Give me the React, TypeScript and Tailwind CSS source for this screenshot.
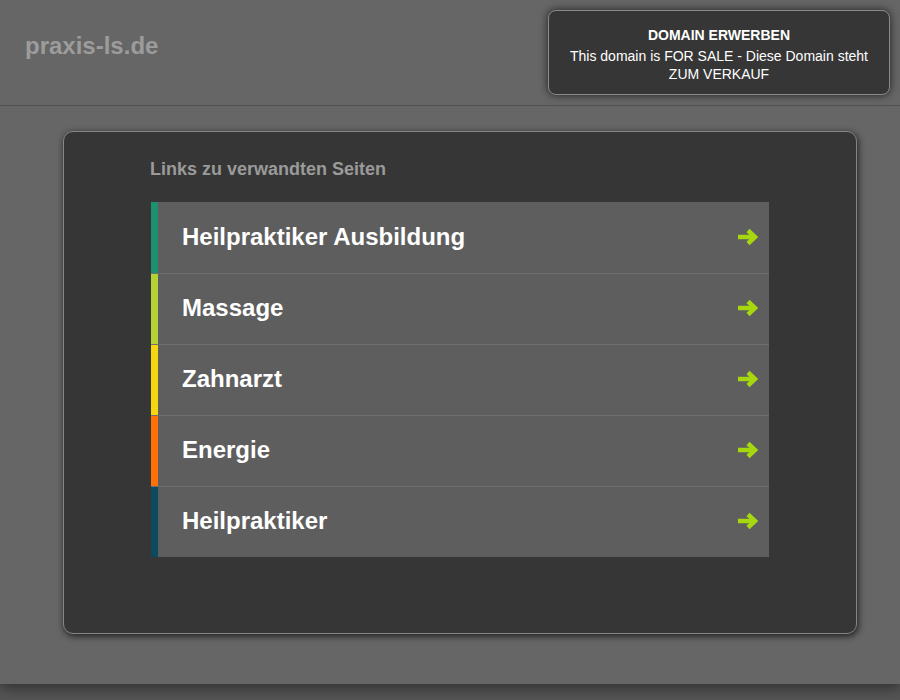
import React from 'react'

type LinkItem = {
  label: string
  bar: string
}

const links: LinkItem[] = [
  { label: 'Heilpraktiker Ausbildung', bar: 'bg-[#1e8f6f]' },
  { label: 'Massage', bar: 'bg-[#b4d236]' },
  { label: 'Zahnarzt', bar: 'bg-[#f6d60f]' },
  { label: 'Energie', bar: 'bg-[#ff7005]' },
  { label: 'Heilpraktiker', bar: 'bg-[#0c4a5f]' },
]

function Arrow() {
  return (
    <svg width="21" height="18" viewBox="0 0 21 18" className="shrink-0">
      <path d="M1 9 H15" stroke="#a6d70f" strokeWidth="4.5" fill="none" />
      <path d="M11 2.5 L18 9 L11 15.5" stroke="#a6d70f" strokeWidth="4.5" fill="none" strokeLinejoin="miter" />
    </svg>
  )
}

export default function App() {
  return (
    <div className="min-h-[700px] bg-[#555555] font-['Liberation_Sans',Arial,sans-serif]">
      <div className="bg-[#666666] shadow-[0_4px_14px_rgba(0,0,0,0.45)]">
        {/* header */}
        <div className="flex items-start justify-between h-[106px] border-b border-[#505050] pl-[25px] pr-[10px]">
          <div className="mt-[31px] text-[24px] leading-[30px] font-bold text-[#9c9c9c]">praxis-ls.de</div>
          <div className="mt-[10px] w-[342px] h-[85px] rounded-[8px] border border-[#8a8a8a] bg-[#363636] shadow-[0_0_8px_rgba(0,0,0,0.7)] text-center text-white pt-[15px]">
            <div className="text-[14px] leading-[18px] font-bold">DOMAIN ERWERBEN</div>
            <div className="mt-[3px] text-[14px] leading-[18px] px-3">
              This domain is FOR SALE - Diese Domain steht ZUM VERKAUF
            </div>
          </div>
        </div>

        {/* main */}
        <div className="h-[578px] pt-[25px] pl-[63px] pr-[43px]">
          <div className="h-[503px] rounded-[10px] border border-[#858585] bg-[#363636] shadow-[1px_2px_7px_rgba(0,0,0,0.75)] pl-[86px] pr-[87px] pt-[26px]">
            <div className="text-[18px] leading-[22px] font-bold text-[#9a9a9a]">Links zu verwandten Seiten</div>
            <div className="mt-[22px] ml-px flex flex-col">
              {links.map((l, i) => (
                <div
                  key={l.label}
                  className={`flex h-[71px] bg-[#5e5e5e] ${i > 0 ? 'border-t border-[#6e6e6e]' : ''}`}
                >
                  <div className={`w-[7px] shrink-0 ${l.bar}`} />
                  <div className="flex flex-1 items-center justify-between pl-[24px] pr-[11px] pb-[2px]">
                    <span className="text-[24px] font-bold text-white">{l.label}</span>
                    <Arrow />
                  </div>
                </div>
              ))}
            </div>
          </div>
        </div>
      </div>
    </div>
  )
}
